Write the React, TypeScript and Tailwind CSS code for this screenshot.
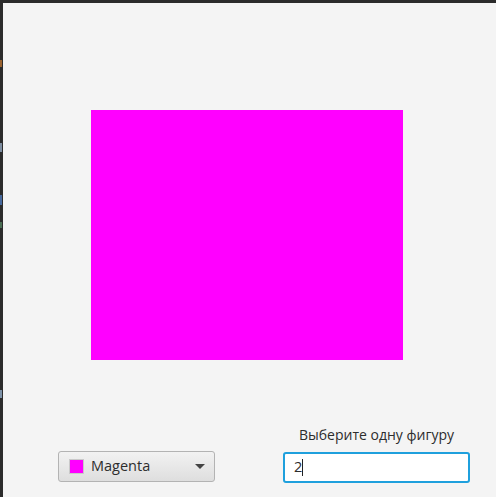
import React from "react";

export default function App() {
  return (
    <div
      className="relative w-[496px] h-[497px] bg-[#2b2b2b] pt-[3px] pl-[3px] overflow-hidden"
      style={{ fontFamily: '"Open Sans", "Noto Sans", sans-serif' }}
    >
      {/* left-edge artifacts from neighbouring window */}
      <div className="absolute left-0 top-[60px] w-[2px] h-[7px] bg-[#9a6330]" />
      <div className="absolute left-0 top-[143px] w-[2px] h-[9px] bg-[#7d8da0]" />
      <div className="absolute left-0 top-[195px] w-[2px] h-[10px] bg-[#46689c]" />
      <div className="absolute left-0 top-[222px] w-[2px] h-[6px] bg-[#4a6e54]" />
      <div className="absolute left-0 top-[390px] w-[2px] h-[8px] bg-[#7d92a8]" />

      <div className="w-full h-full bg-[#f4f4f4] flex flex-col">
        <div className="ml-[88px] mt-[107px] w-[312px] h-[250px] bg-[#ff00ff]" />

        <div className="flex items-end mt-[66px]">
          <div className="ml-[55px] mb-[1px] w-[157px] h-[31px] rounded-[3px] border border-[#b3b3b3] bg-gradient-to-b from-[#f2f2f2] to-[#dedede] flex items-center pl-[10px] pr-[9px]">
            <div className="w-[15px] h-[15px] bg-[#ff00ff] border border-[#c9c9c9]" />
            <span className="ml-[7px] text-[14.5px] text-[#2d2d2d] leading-none">Magenta</span>
            <div className="ml-auto w-0 h-0 border-l-[5px] border-r-[5px] border-t-[5px] border-l-transparent border-r-transparent border-t-[#444444]" />
          </div>

          <div className="ml-[68px] w-[187px] flex flex-col items-center">
            <div className="h-[18px] leading-[18px] text-[14px] text-[#2d2d2d]">Выберите одну фигуру</div>
            <div className="mt-[8px] w-[187px] h-[31px] rounded-[3px] border-2 border-[#1fa0dd] bg-white flex items-center pl-[9px]">
              <span className="text-[14.5px] text-[#2d2d2d] leading-none">2</span>
              <div className="w-px h-[17px] bg-[#222222]" />
            </div>
          </div>
        </div>
      </div>
    </div>
  );
}
